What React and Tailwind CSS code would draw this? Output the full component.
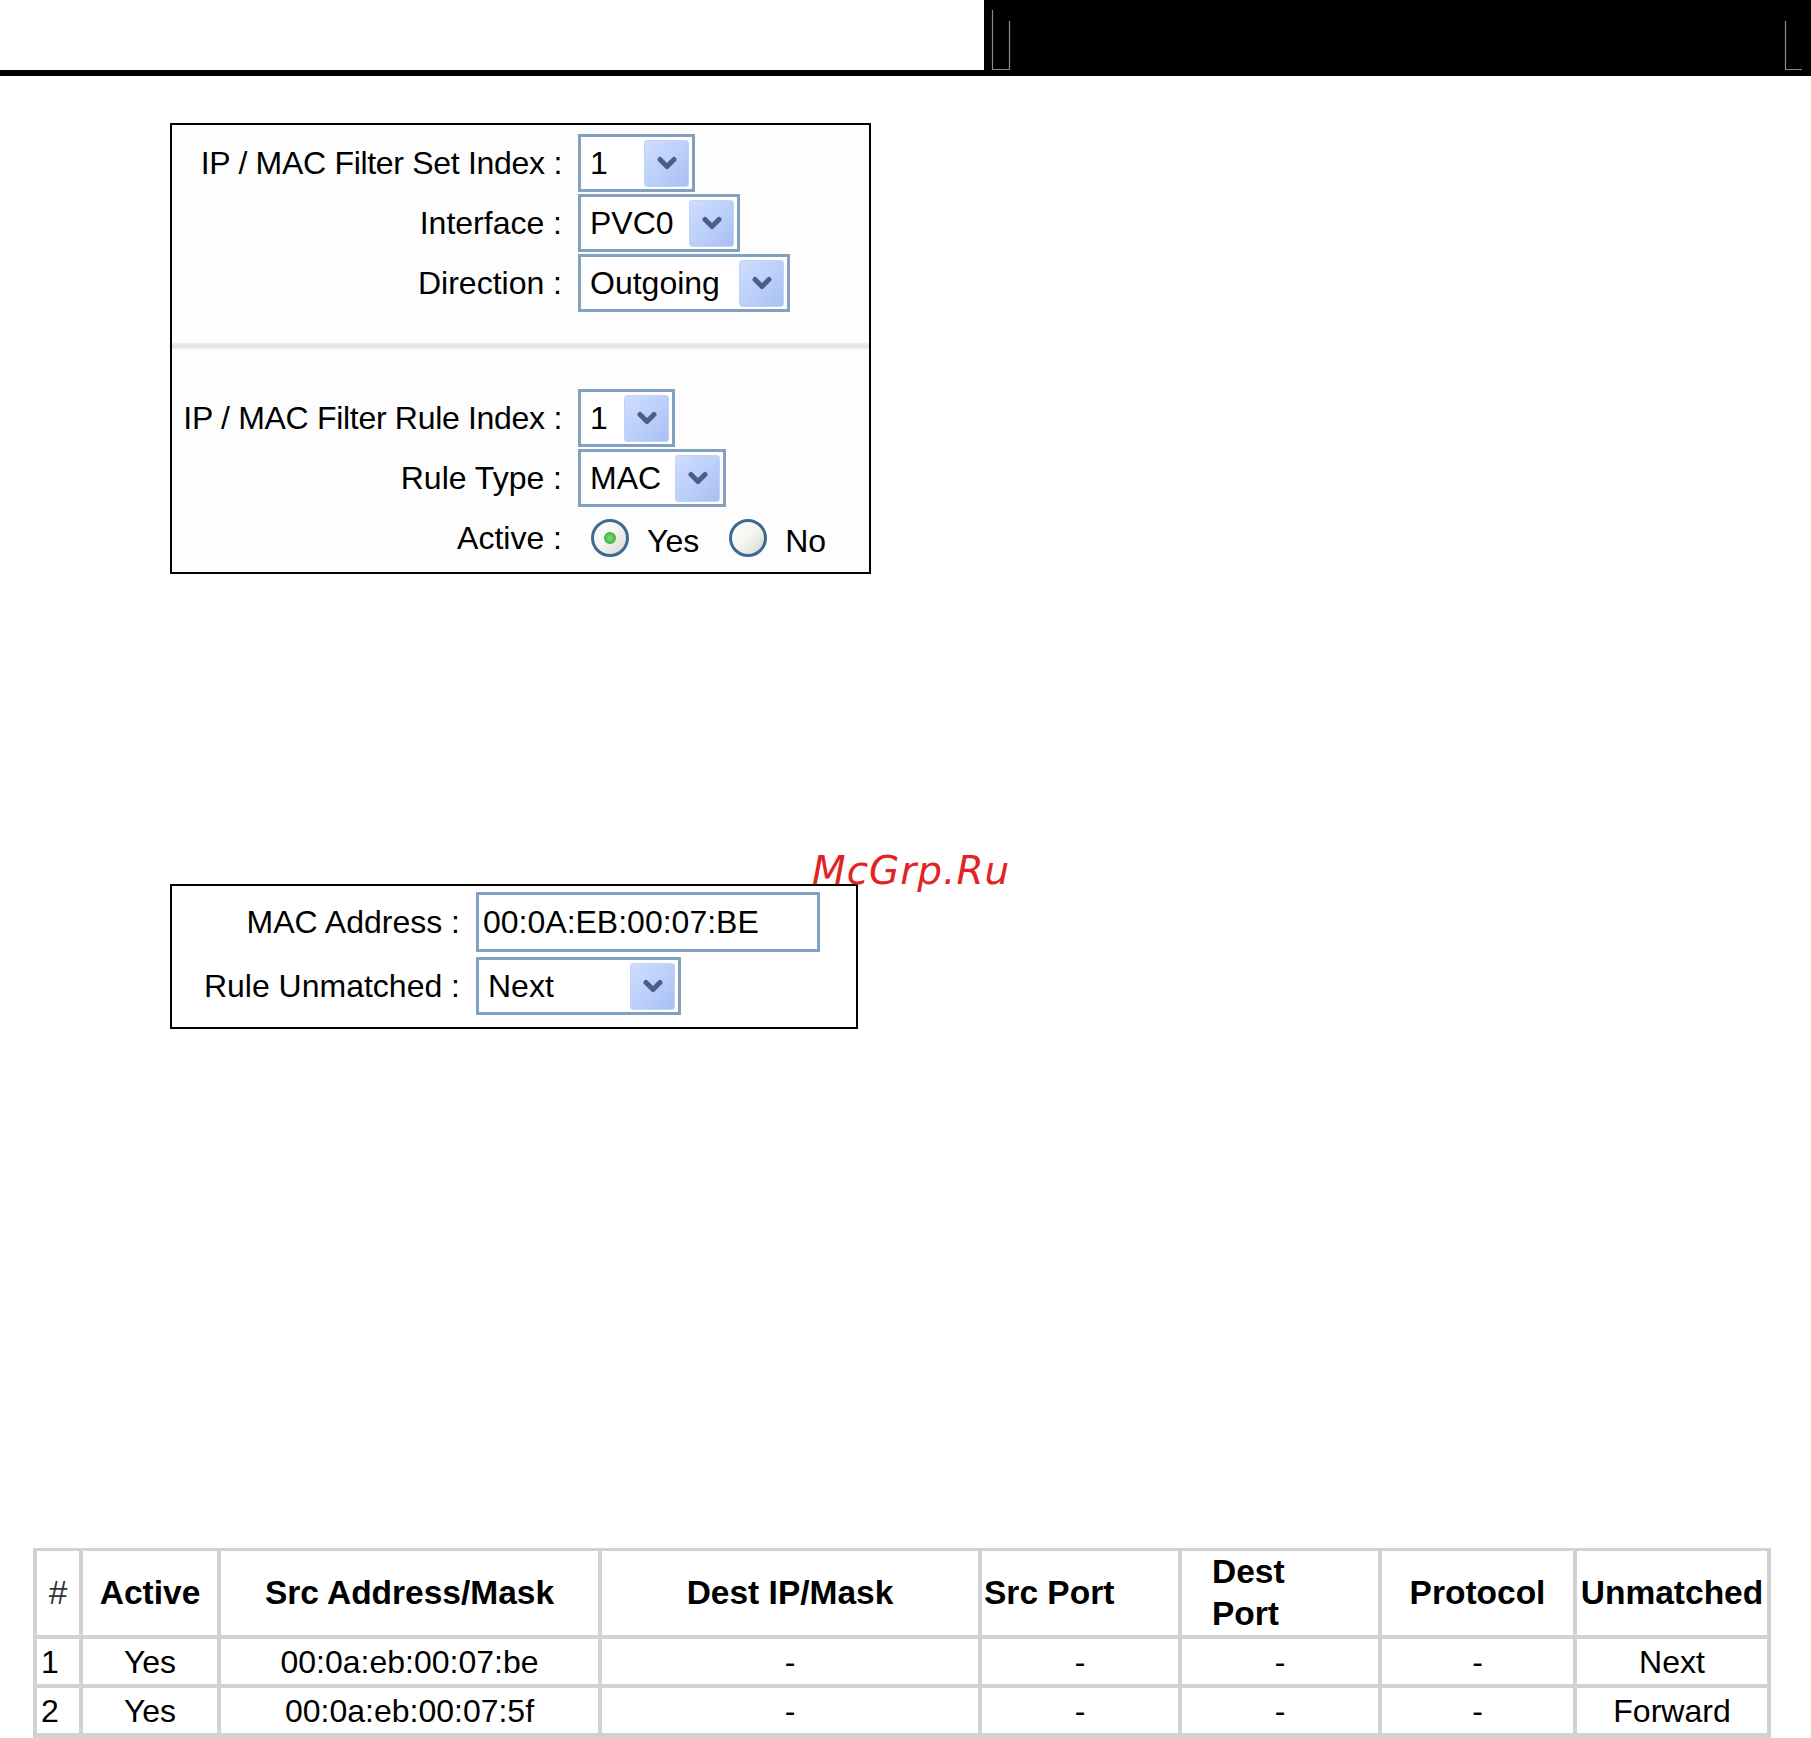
import React from "react";

const Chevron = () => (
  <svg width="22" height="15" viewBox="0 0 22 15">
    <path d="M4 3.5 L11 10.5 L18 3.5" fill="none" stroke="#4b5f86" strokeWidth="5" strokeLinecap="round" strokeLinejoin="round" />
  </svg>
);

function Select({ value, w }) {
  return (
    <div className={`flex h-[58px] items-center border-[3px] border-[#82a0bf] bg-white ${w}`}>
      <span className="flex-1 pl-[9px] leading-none">{value}</span>
      <div className="mr-[3px] flex h-[47px] w-[45px] items-center justify-center rounded-[3px] border border-[#c3d3f8] bg-linear-to-br from-[#d0ddfd] via-[#bcd0fa] to-[#a8bff3]">
        <Chevron />
      </div>
    </div>
  );
}

function Row({ label, labelW, children, h = "h-[60px]" }) {
  return (
    <div className={`flex ${h} items-center`}>
      <div className={`${labelW} text-right leading-none`}>{label}</div>
      <div className="ml-[16px] flex items-center">{children}</div>
    </div>
  );
}

function Radio({ checked }) {
  return (
    <div className="flex h-[38px] w-[38px] items-center justify-center rounded-full border-[3px] border-[#3d6a93] bg-linear-to-br from-white via-[#f4f4f0] to-[#d6d6d0]">
      {checked && <div className="h-[12px] w-[12px] rounded-full bg-radial from-[#7ee07e] to-[#1f9b1f]" />}
    </div>
  );
}

const headers = [
  { t: "#", cls: "justify-center font-normal text-[#333]" },
  { t: "Active", cls: "justify-center" },
  { t: "Src Address/Mask", cls: "justify-center" },
  { t: "Dest IP/Mask", cls: "justify-center" },
  { t: "Src Port", cls: "justify-start pl-[2px]" },
  { t: "Dest Port", cls: "justify-start pl-[30px]", two: true },
  { t: "Protocol", cls: "justify-center" },
  { t: "Unmatched", cls: "justify-center" },
];

const rows = [
  ["1", "Yes", "00:0a:eb:00:07:be", "-", "-", "-", "-", "Next"],
  ["2", "Yes", "00:0a:eb:00:07:5f", "-", "-", "-", "-", "Forward"],
];

export default function App() {
  return (
    <div className="relative h-[1738px] w-[1811px] overflow-hidden bg-white font-['Liberation_Sans',Arial,sans-serif] text-[32px] text-black">
      {/* top strip */}
      <div className="flex h-[76px]">
        <div className="flex-1 border-b-[6px] border-black bg-white" />
        <div className="relative w-[827px] bg-black">
          <svg className="absolute inset-0" width="827" height="76">
            <path d="M8.5 10 V69.5 H25.5 V21" fill="none" stroke="#8a8a8a" strokeWidth="1.2" />
            <path d="M801.5 21 V69.5 H818" fill="none" stroke="#8a8a8a" strokeWidth="1.2" />
          </svg>
        </div>
      </div>

      {/* filter set box */}
      <div className="ml-[170px] mt-[47px] w-[701px] border-2 border-black bg-[#fdfdfd]">
        <div className="pt-[8px]">
          <Row label="IP / MAC Filter Set Index :" labelW="w-[390px] tracking-[-0.3px]">
            <Select value="1" w="w-[117px]" />
          </Row>
          <Row label="Interface :" labelW="w-[390px]">
            <Select value="PVC0" w="w-[162px]" />
          </Row>
          <Row label="Direction :" labelW="w-[390px]">
            <Select value="Outgoing" w="w-[212px]" />
          </Row>
        </div>
        <div className="mt-[30px] h-[6px] bg-linear-to-b from-[#eeeeee] via-[#e2e2e2] to-[#efefef]" />
        <div className="mt-[39px] pb-[4px]">
          <Row label="IP / MAC Filter Rule Index :" labelW="w-[390px] tracking-[-0.3px]">
            <Select value="1" w="w-[97px]" />
          </Row>
          <Row label="Rule Type :" labelW="w-[390px]">
            <Select value="MAC" w="w-[148px]" />
          </Row>
          <Row label="Active :" labelW="w-[390px]">
            <div className="ml-[13px] flex items-center">
              <Radio checked />
              <span className="ml-[18px] mt-[6px] leading-none">Yes</span>
              <div className="ml-[30px]">
                <Radio />
              </div>
              <span className="ml-[18px] mt-[6px] leading-none">No</span>
            </div>
          </Row>
        </div>
      </div>

      {/* MAC box */}
      <div className="ml-[170px] mt-[310px] w-[688px] border-2 border-black bg-white pb-[11px] pt-[6px]">
        <Row label="MAC Address :" labelW="w-[288px]">
          <div className="flex h-[60px] w-[344px] items-center border-[3px] border-[#82a0bf] bg-white pl-[4px] leading-none">
            00:0A:EB:00:07:BE
          </div>
        </Row>
        <div className="mt-[4px]">
          <Row label="Rule Unmatched :" labelW="w-[288px]">
            <Select value="Next" w="w-[205px]" />
          </Row>
        </div>
      </div>

      {/* watermark */}
      <div className="absolute left-[812px] top-[851px] font-['DejaVu_Sans',sans-serif] text-[39px] italic leading-none tracking-[1px] text-[#e02424]">
        McGrp.Ru
      </div>

      {/* table */}
      <div className="ml-[33px] mt-[519px] grid w-[1738px] grid-cols-[42px_134px_377px_376px_196px_196px_191px_190px] gap-[4px] bg-[#d2d2d2] px-[4px] pb-[5px] pt-[3px]">
        {headers.map((h, i) => (
          <div key={i} className={`flex h-[84px] items-center bg-white text-[33.5px] font-bold leading-[42px] ${h.cls}`}>
            {h.two ? (
              <span>
                Dest
                <br />
                Port
              </span>
            ) : (
              h.t
            )}
          </div>
        ))}
        {rows.map((r, ri) =>
          r.map((c, ci) => (
            <div
              key={`${ri}-${ci}`}
              className={`flex h-[45px] items-center bg-white leading-none ${ci === 0 ? "justify-start pl-[4px]" : "justify-center"}`}
            >
              {c}
            </div>
          ))
        )}
      </div>
    </div>
  );
}
